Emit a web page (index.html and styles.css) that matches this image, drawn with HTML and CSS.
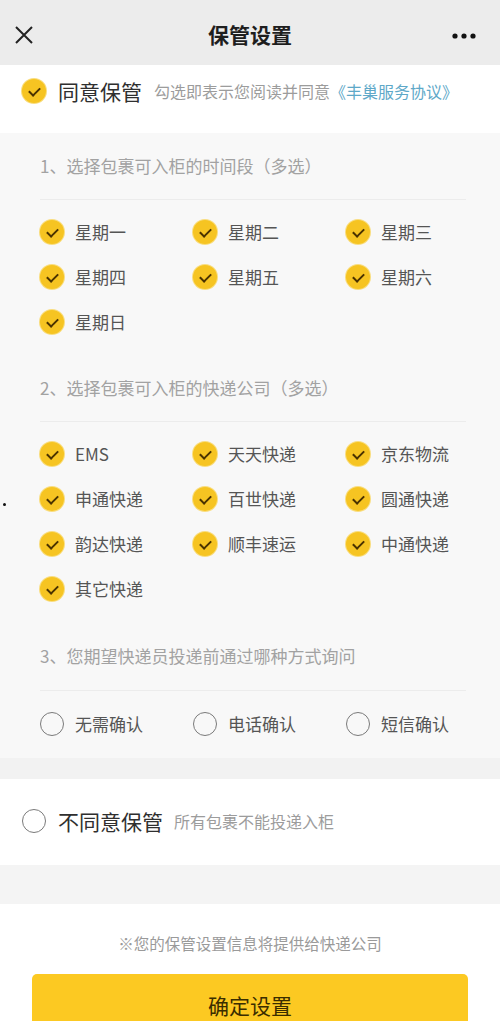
FILE: index.html
```html
<!DOCTYPE html>
<html lang="zh-CN">
<head>
<meta charset="utf-8">
<title>保管设置</title>
<link rel="stylesheet" href="styles.css">
</head>
<body>
<div class="page">
  <header class="nav">
    <svg class="nav-close" width="20" height="20" viewBox="0 0 20 20"><path d="M2 2 L18 18 M18 2 L2 18" stroke="#222" stroke-width="2" fill="none"/></svg>
    <div class="nav-title">保管设置</div>
    <svg class="nav-more" width="24" height="6" viewBox="0 0 24 6"><circle cx="3" cy="3" r="2.6" fill="#111"/><circle cx="12" cy="3" r="2.6" fill="#111"/><circle cx="21" cy="3" r="2.6" fill="#111"/></svg>
  </header>

  <section class="choice">
    <span class="check"></span>
    <span class="choice-label">同意保管</span>
    <span class="choice-sub">勾选即表示您阅读并同意<span class="link">《丰巢服务协议》</span></span>
  </section>

  <section class="settings">
    <div class="group">
      <div class="group-title">1、选择包裹可入柜的时间段（多选）</div>
      <div class="divider"></div>
      <div class="options">
        <div class="opt"><span class="check"></span>星期一</div>
        <div class="opt"><span class="check"></span>星期二</div>
        <div class="opt"><span class="check"></span>星期三</div>
        <div class="opt"><span class="check"></span>星期四</div>
        <div class="opt"><span class="check"></span>星期五</div>
        <div class="opt"><span class="check"></span>星期六</div>
        <div class="opt"><span class="check"></span>星期日</div>
      </div>
    </div>
    <div class="group">
      <div class="group-title">2、选择包裹可入柜的快递公司（多选）</div>
      <div class="divider"></div>
      <div class="options">
        <div class="opt"><span class="check"></span>EMS</div>
        <div class="opt"><span class="check"></span>天天快递</div>
        <div class="opt"><span class="check"></span>京东物流</div>
        <div class="opt"><span class="check"></span>申通快递</div>
        <div class="opt"><span class="check"></span>百世快递</div>
        <div class="opt"><span class="check"></span>圆通快递</div>
        <div class="opt"><span class="check"></span>韵达快递</div>
        <div class="opt"><span class="check"></span>顺丰速运</div>
        <div class="opt"><span class="check"></span>中通快递</div>
        <div class="opt"><span class="check"></span>其它快递</div>
      </div>
    </div>
    <div class="group group-ask">
      <div class="group-title">3、您期望快递员投递前通过哪种方式询问</div>
      <div class="divider"></div>
      <div class="options">
        <div class="opt"><span class="radio"></span>无需确认</div>
        <div class="opt"><span class="radio"></span>电话确认</div>
        <div class="opt"><span class="radio"></span>短信确认</div>
      </div>
    </div>
    <span class="speck"></span>
  </section>

  <div class="band band-a"></div>

  <section class="choice choice-no">
    <span class="radio"></span>
    <span class="choice-label">不同意保管</span>
    <span class="choice-sub sub-no">所有包裹不能投递入柜</span>
  </section>

  <div class="band band-b"></div>

  <footer class="footer">
    <div class="note">※您的保管设置信息将提供给快递公司</div>
    <button class="confirm">确定设置</button>
  </footer>
</div>
</body>
</html>
```

FILE: styles.css
```css
* { box-sizing: border-box; }
html, body { margin: 0; padding: 0; }
body {
  font-family: "Noto Sans CJK SC", "Noto Sans", sans-serif;
  background: #ffffff;
  color: #333;
}
.page { width: 500px; height: 1021px; overflow: hidden; }

.nav {
  height: 65px;
  background: #ececec;
  display: flex;
  align-items: center;
  justify-content: space-between;
  padding: 0 24px 0 14px;
  position: relative;
}
.nav-close { display: block; margin-top: 4px; }
.nav-more { display: block; margin-top: 6px; }
.nav-title {
  position: absolute;
  left: 0; right: 0;
  text-align: center;
  font-size: 21px;
  font-weight: 700;
  color: #1e1e1e;
  line-height: 30px;
  top: 19px;
}

.choice {
  background: #fff;
  display: flex;
  align-items: center;
  padding: 14px 22px 30px;
  height: 68px;
}
.choice .check, .choice .radio { margin-right: 12px; }
.choice-label { font-size: 21px; color: #2f2f2f; line-height: 24px; margin-right: 12px; }
.choice-sub { font-size: 16px; color: #9c9c9c; line-height: 24px; }
.link { color: #5ea8c8; }

.check {
  flex: none;
  width: 24px; height: 24px;
  border-radius: 50%;
  background: #f6c422;
  box-shadow: 0 0 0 1px #f9dd7e;
  position: relative;
  display: inline-block;
}
.check::after {
  content: "";
  position: absolute;
  left: 8.5px; top: 6px;
  width: 5px; height: 9px;
  border-right: 2px solid #4a3200;
  border-bottom: 2px solid #4a3200;
  transform: rotate(45deg);
}
.radio {
  flex: none;
  width: 24px; height: 24px;
  border-radius: 50%;
  border: 1.5px solid #7a7a7a;
  display: inline-block;
  background: transparent;
}

.settings {
  background: #f8f8f8;
  padding: 21px 34px 23px 40px;
  height: 625px;
  position: relative;
}
.group + .group { margin-top: 42px; }
.group-title {
  font-size: 17px;
  line-height: 24px;
  color: #a2a2a2;
}
.divider {
  height: 1px;
  background: #ececec;
  margin: 21px 0 20px;
}
.group + .group-ask { margin-top: 43px; }
.group-ask .divider { margin: 22px 0 21px; }
.options {
  display: grid;
  grid-template-columns: repeat(3, 153px);
  row-gap: 21px;
}
.opt {
  display: flex;
  align-items: center;
  gap: 11px;
  height: 24px;
  font-size: 17px;
  color: #555;
  line-height: 24px;
}
.speck {
  position: absolute;
  left: 3px; top: 370px;
  width: 3px; height: 3px;
  border-radius: 50%;
  background: #111;
}

.band { background: #f2f2f2; }
.band-a { height: 21px; }
.band-b { height: 39px; background: #f4f4f4; }

.choice-no { height: 86px; padding: 30px 22px 32px; }
.choice-no .choice-label { margin-right: 11px; }
.sub-no { font-size: 16px; }

.footer {
  background: #fff;
  padding: 27px 32px 0;
  display: flex;
  flex-direction: column;
  align-items: stretch;
}
.note {
  text-align: center;
  font-size: 15.5px;
  line-height: 24px;
  color: #9a9a9a;
}
.confirm {
  margin-top: 19px;
  height: 62px;
  border: none;
  border-radius: 5px;
  background: #fcc922;
  font-family: "Noto Sans CJK SC", "Noto Sans", sans-serif;
  font-size: 21px;
  color: #3a2d00;
  padding: 0;
  line-height: 60px;
}
```
